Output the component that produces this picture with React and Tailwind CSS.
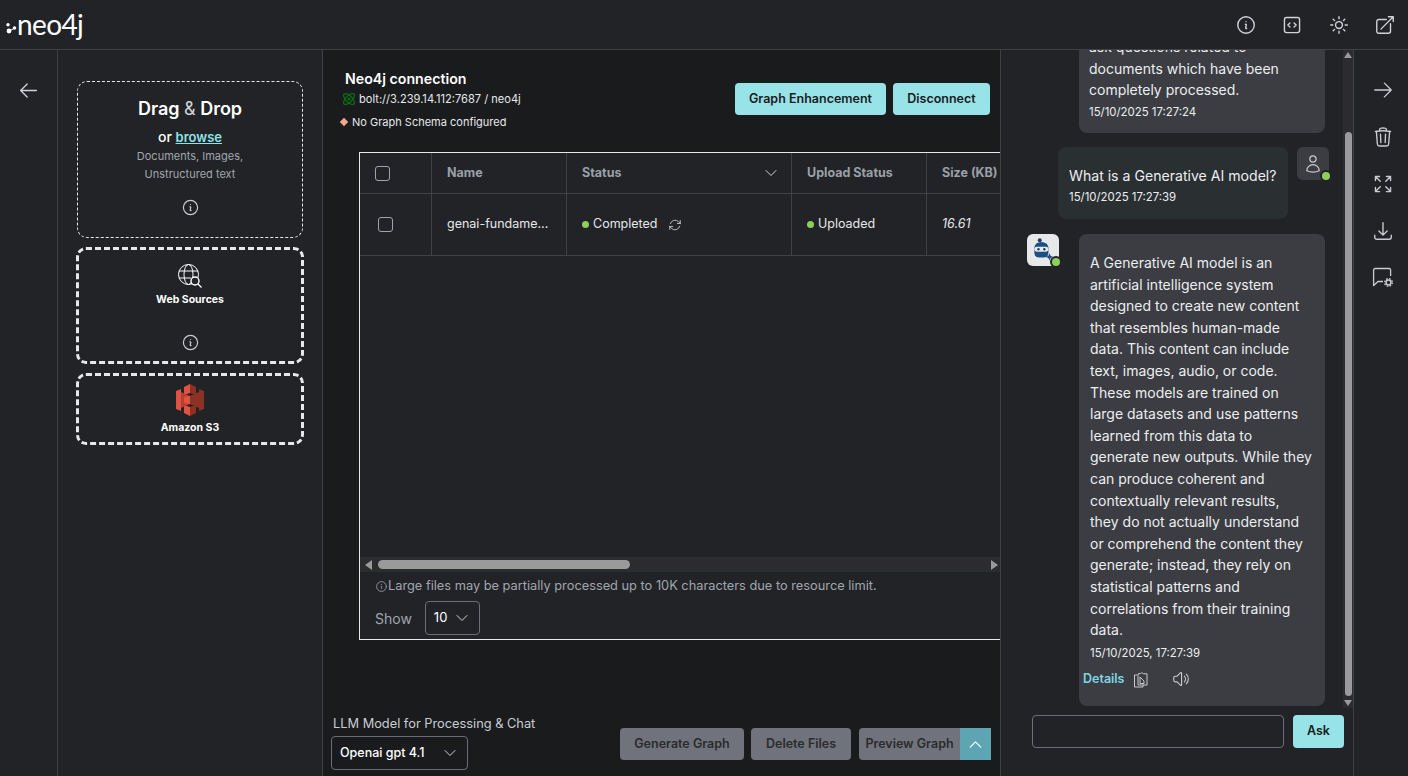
import {
  HiOutlineArrowLeft,
  HiOutlineArrowRight,
  HiOutlineArrowsPointingOut,
  HiOutlineArrowDownTray,
  HiOutlineArrowPath,
  HiOutlineArrowTopRightOnSquare,
  HiOutlineChevronDown,
  HiOutlineChevronUp,
  HiOutlineCodeBracketSquare,
  HiOutlineInformationCircle,
  HiOutlineSpeakerWave,
  HiOutlineSun,
  HiOutlineTrash,
  HiOutlineUser,
} from 'react-icons/hi2';

const ANSWER_LINES = [
  'A Generative AI model is an',
  'artificial intelligence system',
  'designed to create new content',
  'that resembles human-made',
  'data. This content can include',
  'text, images, audio, or code.',
  'These models are trained on',
  'large datasets and use patterns',
  'learned from this data to',
  'generate new outputs. While they',
  'can produce coherent and',
  'contextually relevant results,',
  'they do not actually understand',
  'or comprehend the content they',
  'generate; instead, they rely on',
  'statistical patterns and',
  'correlations from their training',
  'data.',
];

function Logo() {
  return (
    <div className="flex items-center">
      <svg width="16" height="14" viewBox="0 0 16 14" className="mt-[10px] fill-white stroke-white">
        <circle cx="3" cy="1.8" r="1.7" stroke="none" />
        <circle cx="4" cy="8" r="2.4" stroke="none" />
        <circle cx="9.5" cy="5" r="1.8" stroke="none" />
        <line x1="4" y1="8" x2="10" y2="5" strokeWidth="1" />
      </svg>
      <span className="ml-[-4px] mt-[-2px] text-[28px] leading-none tracking-[-0.6px] text-white font-normal font-['Lato',sans-serif]">neo4j</span>
    </div>
  );
}

function GlobeSearch() {
  return (
    <svg width="24" height="24" viewBox="0 0 24 24" fill="none" className="stroke-white">
      <circle cx="10.5" cy="10.5" r="10" strokeWidth="1" />
      <ellipse cx="10.5" cy="10.5" rx="4.5" ry="10" strokeWidth="1" />
      <path d="M1 7h19M1 14h12" strokeWidth="1" />
      <circle cx="17" cy="17" r="4" fill="#222326" strokeWidth="1.4" />
      <path d="M20 20l3.5 3.5" strokeWidth="1.2" />
    </svg>
  );
}

function S3Icon() {
  return (
    <svg width="28" height="32" viewBox="0 0 28 32">
      <polygon points="0,7 5,5 5,27 0,25" fill="#e05243" />
      <polygon points="28,7 23,5 23,27 28,25" fill="#8c3123" />
      <polygon points="14,0 8,3 8,11 14,9" fill="#e05243" />
      <polygon points="14,0 20,3 20,11 14,9" fill="#8c3123" />
      <polygon points="14,32 8,29 8,21 14,23" fill="#e05243" />
      <polygon points="14,32 20,29 20,21 14,23" fill="#8c3123" />
      <polygon points="5,8 14,12 14,20 5,24" fill="#b8402f" />
      <polygon points="23,8 14,12 14,20 23,24" fill="#8c3123" />
      <polygon points="8,13 14,12 14,20 8,19" fill="#e05243" />
    </svg>
  );
}

function GraphDot() {
  return (
    <svg width="14" height="14" viewBox="0 0 14 14" fill="none" className="stroke-[#0d6b12]">
      <ellipse cx="7" cy="7" rx="7" ry="3.2" transform="rotate(45 7 7)" strokeWidth="1.3" />
      <ellipse cx="7" cy="7" rx="7" ry="3.2" transform="rotate(-45 7 7)" strokeWidth="1.3" />
      <circle cx="7" cy="7" r="1.6" fill="#0d6b12" stroke="none" />
    </svg>
  );
}

function BotAvatar() {
  return (
    <svg width="26" height="26" viewBox="0 0 24 24">
      <circle cx="9" cy="3" r="1.8" fill="#1d3f66" />
      <path d="M4 10a6.5 5.5 0 0 1 13 0v4.5a4.5 4.5 0 0 1-4.5 4.5h-4a4.5 4.5 0 0 1-4.5-4.5z" fill="#1d4f82" />
      <rect x="4" y="9" width="13" height="4.6" rx="2.3" fill="#e6e8ea" />
      <circle cx="7.8" cy="11.3" r="1.1" fill="#1d3f66" />
      <circle cx="13.2" cy="11.3" r="1.1" fill="#1d3f66" />
      <path d="M18 15l1 2.4 2.4 1-2.4 1-1 2.4-1-2.4-2.4-1 2.4-1z" fill="#1d4f82" />
    </svg>
  );
}

function CopyIcon() {
  return (
    <svg width="16" height="17" viewBox="0 0 16 17" fill="none" className="stroke-[#c8cbd0]">
      <path d="M4 4H1.5v12h8.5v-2" strokeWidth="1" strokeLinejoin="round" />
      <path d="M5 2.8h2a2 2 0 0 1 3.4 0H14V14H5z" strokeWidth="1" strokeLinejoin="round" />
      <path d="M7 6l4 4v2.5H7z" strokeWidth="1" strokeLinejoin="round" />
    </svg>
  );
}

function ChatSettings() {
  return (
    <svg width="22" height="22" viewBox="0 0 22 22" fill="none" className="stroke-[#c8cbd0]">
      <path d="M11 14.5H6l-4.4 4V3a1.5 1.5 0 0 1 1.5-1.5h14a1.5 1.5 0 0 1 1.5 1.5v6" strokeWidth="1.3" strokeLinejoin="round" />
      <circle cx="16.5" cy="15.5" r="2.4" strokeWidth="1.5" />
      <circle cx="16.5" cy="15.5" r="3.8" strokeWidth="1.4" strokeDasharray="1.6 1.4" />
    </svg>
  );
}

function Triangle({ dir }) {
  if (dir === 'up') return <div className="h-0 w-0 border-x-[4px] border-b-[6px] border-x-transparent border-b-[#9a9a9a]" />;
  if (dir === 'down') return <div className="h-0 w-0 border-x-[4px] border-t-[6px] border-x-transparent border-t-[#9a9a9a]" />;
  if (dir === 'left') return <div className="h-0 w-0 border-y-[5px] border-r-[7px] border-y-transparent border-r-[#9a9a9a]" />;
  return <div className="h-0 w-0 border-y-[5px] border-l-[7px] border-y-transparent border-l-[#9a9a9a]" />;
}

function StatusDot() {
  return <span className="mr-[4px] inline-block h-[7px] w-[7px] rounded-full bg-[#8fce5a]" />;
}

function OnlineDot() {
  return <span className="absolute right-[-3px] bottom-[-2px] box-content h-[8px] w-[8px] rounded-full border-2 border-[#222326] bg-[#8fce5a]" />;
}

function Th({ className, children }) {
  return (
    <div className={`flex h-full shrink-0 items-center border-r border-[#3f4145] pl-[15px] text-[12.5px] font-bold text-[#9aa0a8] ${className}`}>
      {children}
    </div>
  );
}

function Td({ className, children }) {
  return (
    <div className={`flex h-full shrink-0 items-center border-r border-[#3f4145] pl-[15px] text-[12.5px] text-[#e6e8ea] ${className}`}>
      {children}
    </div>
  );
}

function Checkbox() {
  return <div className="h-[15px] w-[15px] rounded-[3px] border border-[#a0a4aa]" />;
}

function LeftPanel() {
  return (
    <aside className="flex w-[265px] shrink-0 flex-col gap-[9px] border-r border-[#3f4145] pt-[31px] pr-[18px] pl-[18px]">
      <div className="mx-[1px] flex h-[157px] flex-col items-center rounded-[10px] border border-dashed border-[#e6e8ea] pt-[15px]">
        <div className="text-[18px] leading-[24px] font-semibold text-white">
          Drag <span className="font-normal text-[#d0d3d8]">&amp;</span> Drop
        </div>
        <div className="mt-[6px] text-[14px] leading-[20px] font-medium text-white">
          or <span className="text-[13px] font-semibold text-[#8fe3e8] underline">browse</span>
        </div>
        <div className="text-center text-[11px] leading-[18px] text-[#a0a6ae]">
          Documents, Images,
          <br />
          Unstructured text
        </div>
        <HiOutlineInformationCircle className="mt-[15px] h-[19px] w-[19px] text-[#c8cbd0]" />
      </div>
      <div className="flex h-[117px] flex-col items-center rounded-[10px] border-[3px] border-dashed border-[#e6e8ea] pt-[14px]">
        <GlobeSearch />
        <div className="mt-[5px] text-[10.5px] leading-[14px] font-bold text-white">Web Sources</div>
        <HiOutlineInformationCircle className="mt-[26px] h-[19px] w-[19px] text-[#c8cbd0]" />
      </div>
      <div className="flex h-[72px] flex-col items-center rounded-[10px] border-[3px] border-dashed border-[#e6e8ea] pt-[8px]">
        <S3Icon />
        <div className="mt-[5px] text-[10.5px] leading-[14px] font-bold text-white">Amazon S3</div>
      </div>
    </aside>
  );
}

function FileTable() {
  return (
    <div className="ml-[36px] flex h-[488px] flex-col overflow-hidden border-y border-l border-[#e6e8ea] bg-[#222326]">
      <div className="flex h-[41px] w-[700px] shrink-0 border-b border-[#3f4145]">
        <Th className="w-[72px]"><Checkbox /></Th>
        <Th className="w-[135px]">Name</Th>
        <Th className="w-[225px] justify-between pr-[12px]">
          Status
          <HiOutlineChevronDown className="h-[16px] w-[16px] text-[#d0d3d8]" />
        </Th>
        <Th className="w-[135px]">Upload Status</Th>
        <Th className="w-[133px] border-r-0">Size (KB)</Th>
      </div>
      <div className="flex h-[62px] w-[700px] shrink-0 border-b border-[#3f4145]">
        <Td className="w-[72px] !pl-[18px]"><Checkbox /></Td>
        <Td className="w-[135px]">genai-fundame...</Td>
        <Td className="w-[225px]">
          <StatusDot />
          Completed
          <HiOutlineArrowPath className="ml-[11px] h-[14px] w-[14px] text-[#c8cbd0]" />
        </Td>
        <Td className="w-[135px]">
          <StatusDot />
          Uploaded
        </Td>
        <Td className="w-[133px] border-r-0 italic">16.61</Td>
      </div>
      <div className="flex-1" />
      <div className="flex h-[15px] shrink-0 items-center bg-[#2c2c2e] pr-[2px] pl-[5px]">
        <Triangle dir="left" />
        <div className="ml-[6px] h-[9px] w-[252px] rounded-full bg-[#9a9a9a]" />
        <div className="flex-1" />
        <Triangle dir="right" />
      </div>
      <div className="flex h-[67px] shrink-0 flex-col pl-[15px]">
        <div className="mt-[5px] flex h-[18px] items-center text-[12.8px] text-[#a0a6ae]">
          <HiOutlineInformationCircle className="h-[13px] w-[13px]" />
          Large files may be partially processed up to 10K characters due to resource limit.
        </div>
        <div className="mt-[6px] flex items-center">
          <span className="text-[14px] text-[#a0a6ae]">Show</span>
          <div className="ml-[13px] flex h-[34px] w-[55px] items-center justify-between rounded-[4px] border border-[#6b6e75] pr-[9px] pl-[8px] text-[13px] text-white">
            10
            <HiOutlineChevronDown className="h-[16px] w-[16px] text-[#d0d3d8]" />
          </div>
        </div>
      </div>
    </div>
  );
}

function CenterPanel() {
  return (
    <main className="flex w-[677px] shrink-0 flex-col overflow-hidden bg-[#1a1b1d]">
      <div className="flex h-[102px] shrink-0 justify-between pr-[10px] pl-[17px]">
        <div className="flex flex-col">
          <div className="mt-[20px] pl-[5px] text-[14.2px] leading-[18px] font-semibold text-white">Neo4j connection</div>
          <div className="mt-[3px] flex items-center gap-[3px] pl-[2px] text-[11.1px] leading-[16px] text-[#e6e8ea]">
            <GraphDot />
            bolt://3.239.14.112:7687 / neo4j
          </div>
          <div className="mt-[7px] flex items-center gap-[5px] text-[11px] leading-[16px] text-[#e6e8ea]">
            <span className="ml-[1px] h-[6px] w-[6px] rotate-45 bg-[#f4a58c]" />
            No Graph Schema configured
          </div>
        </div>
        <div className="mt-[33px] flex gap-[7px]">
          <button className="h-[32px] w-[151px] rounded-[4px] bg-[#97e3e8] text-[12.5px] font-semibold text-[#1a1b1d]">Graph Enhancement</button>
          <button className="h-[32px] w-[97px] rounded-[4px] bg-[#97e3e8] text-[12.5px] font-semibold text-[#1a1b1d]">Disconnect</button>
        </div>
      </div>
      <FileTable />
      <div className="flex flex-1 items-end justify-between pr-[9px] pb-[6px] pl-[8px]">
        <div className="flex flex-col">
          <div className="pl-[2px] text-[12.8px] leading-[18px] text-[#c8cdd3]">LLM Model for Processing &amp; Chat</div>
          <div className="mt-[3px] flex h-[34px] w-[137px] items-center justify-between rounded-[4px] border border-[#6b6e75] pr-[9px] pl-[8px] text-[12.5px] font-medium text-white">
            Openai gpt 4.1
            <HiOutlineChevronDown className="h-[16px] w-[16px] text-[#d0d3d8]" />
          </div>
        </div>
        <div className="mb-[10px] flex text-[12.5px] font-semibold text-[#2a2b2e]">
          <button className="h-[32px] w-[124px] rounded-[4px] bg-[#70737c]">Generate Graph</button>
          <button className="ml-[7px] h-[32px] w-[100px] rounded-[4px] bg-[#70737c]">Delete Files</button>
          <button className="ml-[8px] flex h-[32px] w-[132px] items-center overflow-hidden rounded-l-[4px] bg-[#70737c]">
            <span className="w-[101px] text-center">Preview Graph</span>
            <span className="flex h-full flex-1 items-center justify-center bg-[#5ea5b3]">
              <HiOutlineChevronUp className="h-[17px] w-[17px] text-white" />
            </span>
          </button>
        </div>
      </div>
    </main>
  );
}

function ChatPanel() {
  return (
    <section className="flex w-[354px] shrink-0 flex-col border-x border-[#3f4145]">
      <div className="flex h-[658px] shrink-0">
        <div className="flex flex-1 flex-col justify-end overflow-hidden pb-[2px]">
          <div className="ml-[78px] w-[246px] shrink-0 rounded-[8px] bg-[#3b3d42] px-[10px] pt-[10px] pb-[12px] text-[14px] leading-[21.6px] text-[#eceef0]">
            <div>ask questions related to documents which have been completely processed.</div>
            <div className="mt-[2px] text-[11.4px] leading-[18px]">15/10/2025 17:27:24</div>
          </div>
          <div className="mt-[14px] flex shrink-0">
            <div className="ml-[57px] h-[72px] w-[230px] rounded-[8px] bg-[#2a2f32] px-[11px] pt-[18px] text-[14.1px] leading-[21.6px] text-[#eceef0]">
              <div className="whitespace-nowrap">What is a Generative AI model?</div>
              <div className="mt-[1px] text-[11.4px] leading-[18px]">15/10/2025 17:27:39</div>
            </div>
            <div className="relative ml-[9px] flex h-[33px] w-[32px] items-center justify-center rounded-[6px] bg-[#3b3d42]">
              <HiOutlineUser className="h-[20px] w-[20px] text-[#c8cbd0]" />
              <OnlineDot />
            </div>
          </div>
          <div className="mt-[15px] flex shrink-0">
            <div className="relative ml-[26px] flex h-[32px] w-[32px] items-center justify-center rounded-[6px] bg-[#e6e8ea]">
              <BotAvatar />
              <OnlineDot />
            </div>
            <div className="ml-[20px] h-[472px] w-[246px] rounded-[8px] bg-[#3b3d42]">
              <div className="pt-[18px] pl-[11px] text-[14px] leading-[21.6px] text-[#eceef0]">
                {ANSWER_LINES.map((line, i) => <div key={i} className="whitespace-nowrap">{line}</div>)}
              </div>
              <div className="mt-[3px] pl-[11px] text-[11.4px] leading-[18px] text-[#eceef0]">15/10/2025, 17:27:39</div>
              <div className="mt-[8px] flex items-center pl-[4px]">
                <span className="text-[12.5px] font-semibold text-[#7fd6e4]">Details</span>
                <span className="ml-[9px]"><CopyIcon /></span>
                <HiOutlineSpeakerWave className="ml-[23px] h-[18px] w-[18px] text-[#c8cbd0]" />
              </div>
            </div>
          </div>
        </div>
        <div className="flex w-[10px] shrink-0 flex-col items-center bg-[#2c2c2e] py-[2px]">
          <Triangle dir="up" />
          <div className="mt-[74px] w-[7px] flex-1 rounded-full bg-[#9a9a9a]" />
          <div className="mt-[4px]"><Triangle dir="down" /></div>
        </div>
      </div>
      <div className="mt-[7px] flex pl-[31px]">
        <div className="h-[33px] w-[252px] rounded-[4px] border border-[#6b6e75] bg-[#222326]" />
        <button className="ml-[9px] h-[33px] w-[51px] rounded-[4px] bg-[#97e3e8] text-[12.5px] font-semibold text-[#1a1b1d]">Ask</button>
      </div>
    </section>
  );
}

export default function App() {
  return (
    <div className="flex h-[776px] w-[1408px] flex-col overflow-hidden bg-[#222326] font-['Inter',sans-serif]">
      <header className="flex h-[50px] shrink-0 items-center justify-between border-b border-[#3f4145] pr-[12px] pl-[5px]">
        <Logo />
        <div className="flex items-center gap-[24.33px] text-[#d0d3d8]">
          <HiOutlineInformationCircle className="h-[22px] w-[22px]" />
          <HiOutlineCodeBracketSquare className="h-[22px] w-[22px]" />
          <HiOutlineSun className="h-[22px] w-[22px]" />
          <HiOutlineArrowTopRightOnSquare className="h-[22px] w-[22px]" />
        </div>
      </header>
      <div className="flex flex-1 overflow-hidden">
        <nav className="flex w-[58px] shrink-0 justify-center border-r border-[#3f4145] pt-[30px] text-[#d0d3d8]">
          <HiOutlineArrowLeft className="h-[21px] w-[21px]" />
        </nav>
        <LeftPanel />
        <CenterPanel />
        <ChatPanel />
        <nav className="flex flex-1 flex-col items-center gap-[25px] pt-[29px] pl-[3px] text-[#c8cbd0]">
          <HiOutlineArrowRight className="h-[22px] w-[22px]" />
          <HiOutlineTrash className="h-[22px] w-[22px]" />
          <HiOutlineArrowsPointingOut className="h-[22px] w-[22px]" />
          <HiOutlineArrowDownTray className="h-[22px] w-[22px]" />
          <ChatSettings />
        </nav>
      </div>
    </div>
  );
}
